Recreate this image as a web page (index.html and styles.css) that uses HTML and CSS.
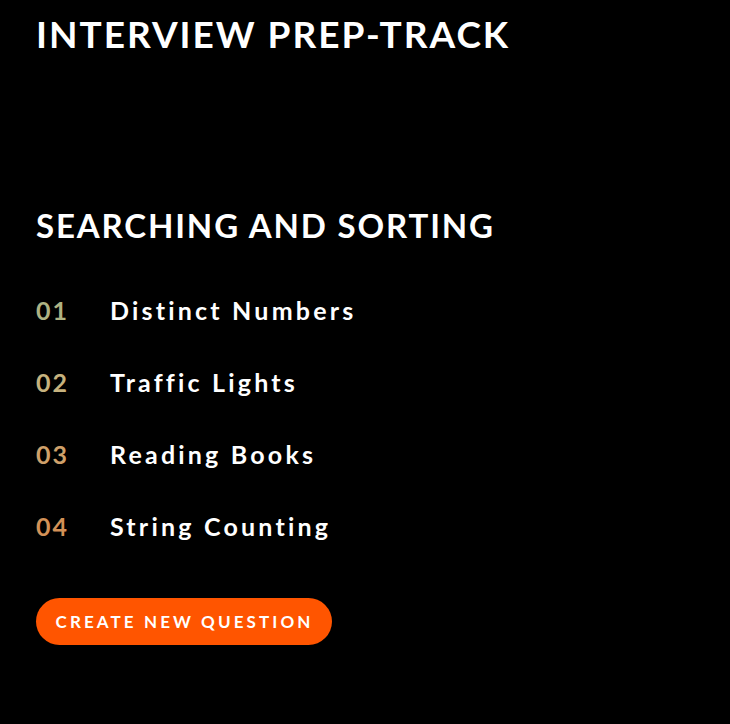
FILE: index.html
```html
<!DOCTYPE html>
<html lang="en">
<head>
<meta charset="utf-8">
<title>Interview Prep-Track</title>
<link rel="stylesheet" href="styles.css">
</head>
<body>
<main class="page">
  <h1 class="site-title">INTERVIEW PREP-TRACK</h1>
  <section class="topic">
    <h2 class="topic-title">SEARCHING AND SORTING</h2>
    <ol class="questions">
      <li class="question"><span class="num n1">01</span><span class="name">Distinct Numbers</span></li>
      <li class="question"><span class="num n2">02</span><span class="name">Traffic Lights</span></li>
      <li class="question"><span class="num n3">03</span><span class="name">Reading Books</span></li>
      <li class="question"><span class="num n4">04</span><span class="name">String Counting</span></li>
    </ol>
    <button class="create-btn" type="button">CREATE NEW QUESTION</button>
  </section>
</main>
</body>
</html>
```
FILE: styles.css
```css
html, body {
  margin: 0;
  padding: 0;
  background: #000;
  color: #fff;
  font-family: "Lato", "Noto Sans", sans-serif;
}
.page {
  padding: 12px 36px 40px 36px;
  display: flex;
  flex-direction: column;
}
.site-title {
  margin: 0;
  font-size: 37px;
  font-weight: 700;
  letter-spacing: 2px;
  line-height: 44px;
}
.topic {
  margin-top: 149px;
  display: flex;
  flex-direction: column;
}
.topic-title {
  margin: 0;
  font-size: 33px;
  font-weight: 700;
  letter-spacing: 1.85px;
  line-height: 40px;
}
.questions {
  list-style: none;
  margin: 49px 0 0 0;
  padding: 0;
  display: flex;
  flex-direction: column;
  gap: 40px;
}
.question {
  display: flex;
  align-items: center;
  height: 32px;
  font-size: 25px;
  font-weight: 700;
  letter-spacing: 3.2px;
}
.num {
  width: 74px;
  flex: none;
  letter-spacing: 2px;
}
.n1 { color: #aeb283; }
.n2 { color: #c6b27e; }
.n3 { color: #cfa06a; }
.n4 { color: #d39157; }
.create-btn {
  margin-top: 56px;
  align-self: flex-start;
  height: 47px;
  width: 296px;
  border: none;
  border-radius: 24px;
  background: #ff5500;
  color: #fff;
  font-family: inherit;
  font-size: 17px;
  font-weight: 700;
  letter-spacing: 3.1px;
  padding: 0 0 0 1px;
}
```
